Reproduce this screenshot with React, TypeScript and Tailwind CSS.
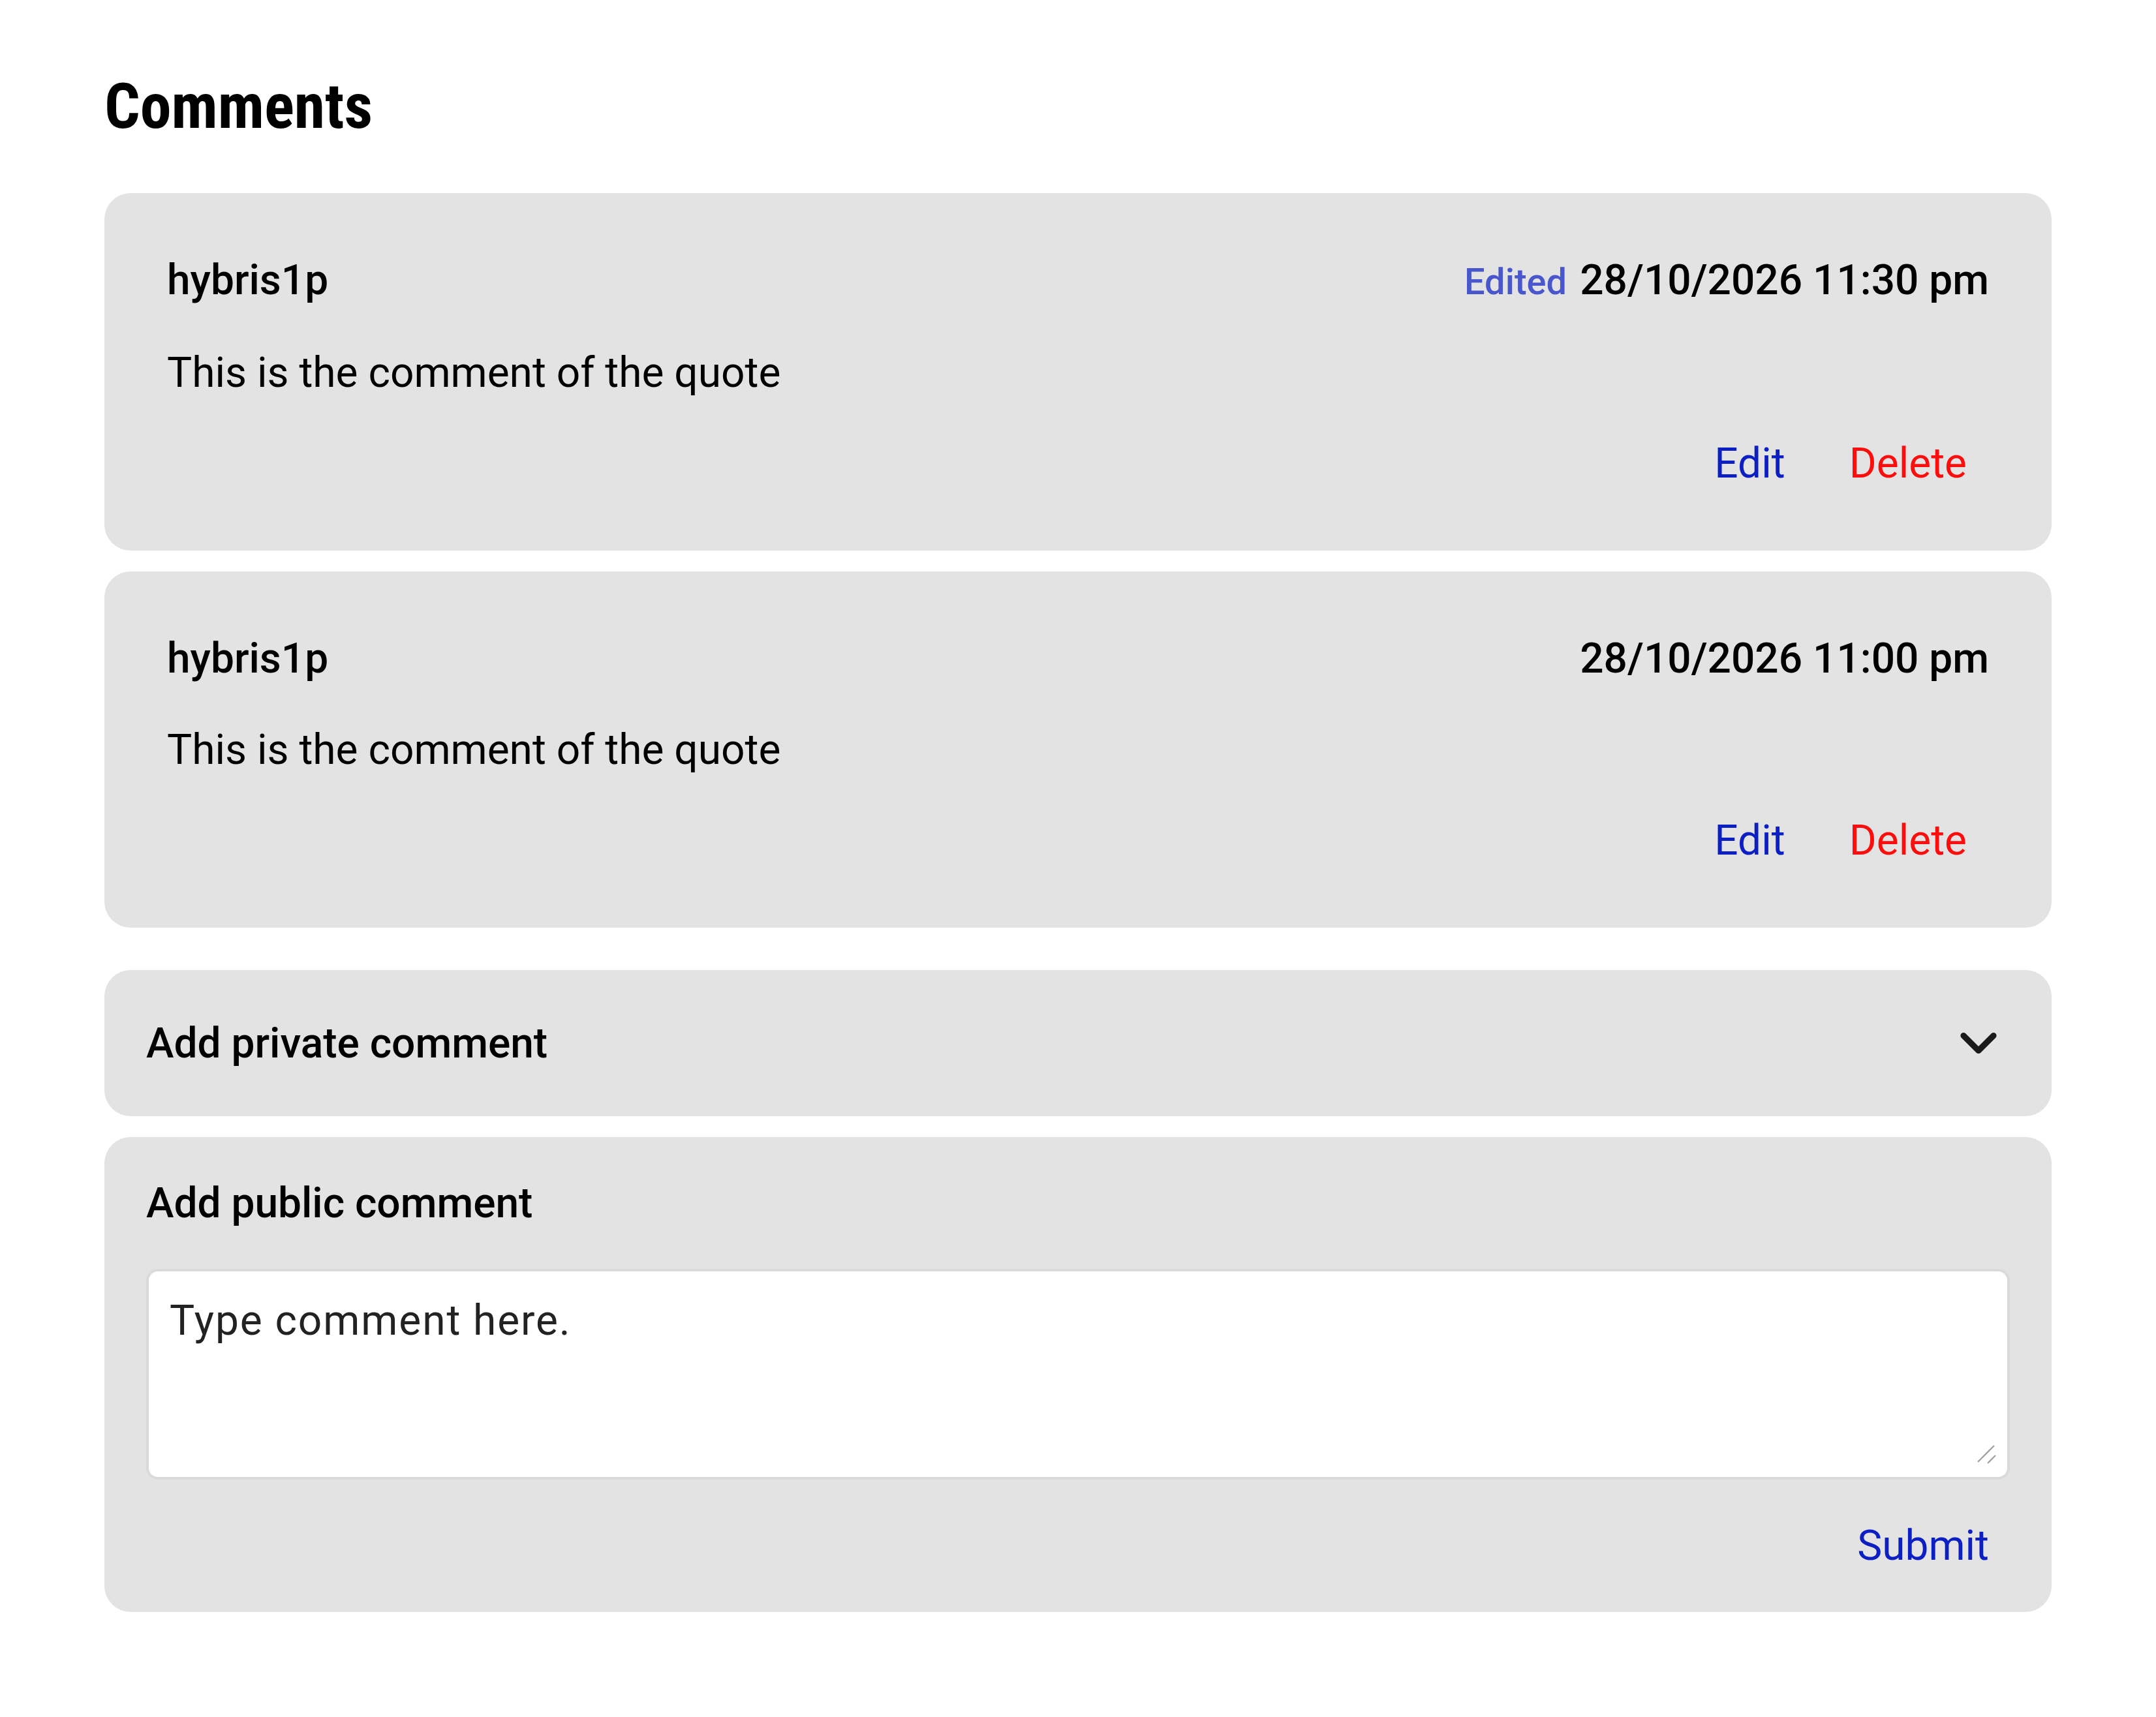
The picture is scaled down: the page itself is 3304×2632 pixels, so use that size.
import React, { useState } from 'react';
import { ChevronDown } from 'lucide-react';

type Comment = {
  id: number;
  author: string;
  date: string;
  text: string;
  edited?: boolean;
};

const comments: Comment[] = [
  { id: 1, author: 'hybris1p', date: '28/10/2026 11:30 pm', text: 'This is the comment of the quote', edited: true },
  { id: 2, author: 'hybris1p', date: '28/10/2026 11:00 pm', text: 'This is the comment of the quote' },
];

function CommentCard({ comment }: { comment: Comment }) {
  return (
    <div className="rounded-[40px] bg-[#e3e3e3] px-[96px] pt-[96px] pb-[85px]">
      <div className="flex items-baseline justify-between text-[64px] font-medium leading-[76px] text-black">
        <span>{comment.author}</span>
        <span className="flex items-baseline gap-[20px]">
          {comment.edited && <span className="text-[56px] text-[#4a56cb]">Edited</span>}
          <span>{comment.date}</span>
        </span>
      </div>
      <p className="mt-[54px] text-[64px] leading-[96px] text-black">{comment.text}</p>
      <div className="mt-[43px] flex justify-end gap-[42px]">
        <button className="px-[28px] text-[64px] leading-[96px] text-[#0c1fc2]">Edit</button>
        <button className="pl-[28px] pr-[34px] text-[64px] leading-[96px] text-[#ff0d0d]">Delete</button>
      </div>
    </div>
  );
}

export default function App() {
  const [privateOpen, setPrivateOpen] = useState(false);
  const [text, setText] = useState('');

  return (
    <div className="min-h-screen bg-white px-[160px] pt-[106px] pb-[160px] font-['Roboto',sans-serif] text-black">
      <h1 className="text-[96px] font-bold font-stretch-condensed leading-[115px]">Comments</h1>

      <div className="mt-[75px] flex flex-col gap-[32px]">
        {comments.map((c) => (
          <CommentCard key={c.id} comment={c} />
        ))}
      </div>

      {/* private / public comment boxes */}
      <div className="mt-[65px] flex flex-col gap-[32px]">
        <button
          onClick={() => setPrivateOpen(!privateOpen)}
          className="flex h-[224px] w-full items-center justify-between rounded-[40px] bg-[#e3e3e3] pl-[64px] pr-[66px] text-left"
        >
          <span className="text-[64px] font-medium leading-[75px]">Add private comment</span>
          <ChevronDown size={92} strokeWidth={2.4} className="text-[#1a1a1a]" />
        </button>

        <div className="flex flex-col rounded-[40px] bg-[#e3e3e3] p-[64px]">
          <h2 className="text-[64px] font-medium leading-[75px]">Add public comment</h2>
          <div className="relative mt-[63px]">
            <textarea
              value={text}
              onChange={(e) => setText(e.target.value)}
              placeholder="Type comment here."
              className="block h-[323px] w-full resize-none rounded-[18px] border-[4px] border-[#dadada] bg-white px-[32px] pt-[34px] pb-[30px] text-[64px] leading-[83px] tracking-[1.9px] text-[#222] outline-none placeholder:text-[#222]"
            />
            {/* resize grip */}
            <svg
              className="pointer-events-none absolute right-[20px] bottom-[23px] h-[32px] w-[32px]"
              viewBox="0 0 32 32"
              fill="none"
              stroke="#a3a3a3"
              strokeWidth="2.4"
            >
              <line x1="3" y1="28" x2="28" y2="3" />
              <line x1="18" y1="30" x2="30" y2="18" />
            </svg>
          </div>
          <div className="mt-[64px] flex justify-end">
            <button className="px-[32px] text-[64px] leading-[75px] text-[#0c1fc2]">Submit</button>
          </div>
        </div>
      </div>
    </div>
  );
}
